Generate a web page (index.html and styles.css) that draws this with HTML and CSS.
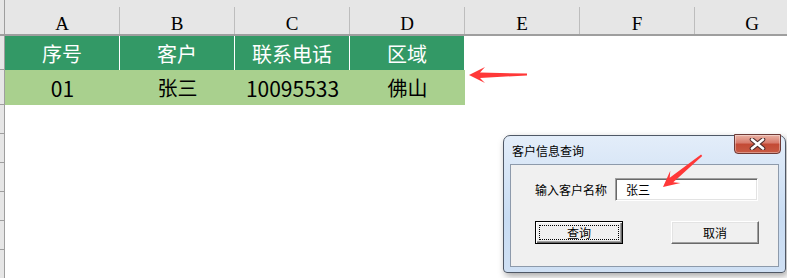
FILE: index.html
```html
<!DOCTYPE html>
<html lang="zh-CN">
<head>
    <meta charset="UTF-8">
    <meta name="viewport" content="width=device-width, initial-scale=1.0">
    <title>客户信息查询</title>
    <link rel="stylesheet" href="styles.css">
</head>
<body>
    <div class="sheet">
        <div class="col-heads">
            <div class="corner"></div>
            <div class="col-head">A</div>
            <div class="col-head">B</div>
            <div class="col-head">C</div>
            <div class="col-head">D</div>
            <div class="col-head">E</div>
            <div class="col-head">F</div>
            <div class="col-head">G</div>
        </div>
        <div class="row r-title">
            <div class="row-head"></div>
            <div class="cell">序号</div>
            <div class="cell">客户</div>
            <div class="cell">联系电话</div>
            <div class="cell">区域</div>
        </div>
        <div class="row r-data">
            <div class="row-head"></div>
            <div class="cell num">01</div>
            <div class="cell">张三</div>
            <div class="cell num">10095533</div>
            <div class="cell">佛山</div>
        </div>
        <div class="row r-empty"><div class="row-head"></div></div>
        <div class="row r-empty"><div class="row-head"></div></div>
        <div class="row r-empty"><div class="row-head"></div></div>
        <div class="row r-empty"><div class="row-head"></div></div>
        <div class="row r-empty"><div class="row-head"></div></div>
        <div class="row r-empty"><div class="row-head"></div></div>
    </div>

    <!-- query dialog floating over the sheet -->
    <div class="dialog">
        <div class="title-bar">
            <span>客户信息查询</span>
            <div class="close">
                <svg width="17" height="12" viewBox="0 0 17 12">
                    <path d="M3 1.5 L14 10.5 M14 1.5 L3 10.5" stroke="#4a2a2a" stroke-width="4.6" stroke-linecap="round"/>
                    <path d="M3 1.5 L14 10.5 M14 1.5 L3 10.5" stroke="#ffffff" stroke-width="2.6" stroke-linecap="round"/>
                </svg>
            </div>
        </div>
        <div class="client">
            <div class="form-row">
                <span class="label">输入客户名称</span>
                <input class="field" type="text" value="张三">
            </div>
            <div class="btn-row">
                <button class="btn default">查询</button>
                <button class="btn">取消</button>
            </div>
        </div>
    </div>

    <svg class="marks" width="787" height="278" viewBox="0 0 787 278">
        <polygon points="469,75 485,67 480,72.5 527,73.6 527,75.4 480,78 485,83" fill="#ff3838"/>
        <g transform="translate(663,187) rotate(-39.4)">
            <polygon points="0,0 16,-8 11,-2.8 50,-0.9 50,0.9 11,2.8 16,8" fill="#ff3838"/>
        </g>
    </svg>
</body>
</html>
```

FILE: styles.css
```css
body {
    margin: 0;
    width: 787px;
    height: 278px;
    overflow: hidden;
    position: relative;
    background: #ffffff;
    font-family: "Noto Sans CJK SC", sans-serif;
}

/* column letters */
.col-heads {
    display: flex;
    height: 34px;
    background: #e6e6e6;
    border-bottom: 2px solid #9e9e9e;
}
.corner {
    flex: none;
    width: 4px;
    border-right: 1px solid #9e9e9e;
}
.col-head {
    flex: none;
    width: 115px;
    box-sizing: border-box;
    margin-top: 7px;
    padding-top: 6px;
    line-height: 22px;
    text-align: center;
    border-right: 1px solid #bdbdbd;
    font-family: "Liberation Serif", serif;
    font-size: 19px;
    color: #000;
}

/* rows */
.row { display: flex; }
.row-head {
    flex: none;
    width: 5px;
    box-sizing: border-box;
    background: #e6e6e6;
    border-right: 1px solid #9e9e9e;
    border-bottom: 1px solid #9e9e9e;
}
.cell {
    flex: none;
    width: 115px;
    box-sizing: border-box;
    display: flex;
    align-items: center;
    justify-content: center;
    font-size: 20px;
}
.cell.num { font-size: 21px; }
.r-title { height: 34px; }
.r-title .cell {
    background: #339966;
    color: #ffffff;
    border-right: 1px solid #ffffff;
}
.r-data { height: 35px; }
.r-data .cell {
    background: #a9d08e;
    color: #000;
}
.r-empty { height: 29px; }

/* dialog */
.dialog {
    position: absolute;
    left: 503px;
    top: 135px;
    width: 283px;
    height: 138px;
    box-sizing: border-box;
    border: 1px solid #4f5866;
    border-radius: 7px 7px 4px 4px;
    background: linear-gradient(#e3edf9, #c8dcf3 60%, #cfe0f4);
    box-shadow: 2px 3px 7px rgba(0, 0, 0, 0.35);
}
.title-bar {
    position: relative;
    height: 28px;
    display: flex;
    align-items: center;
    padding-left: 8px;
    font-size: 12px;
    color: #000;
}
.close {
    position: absolute;
    right: 4px;
    top: -2px;
    width: 47px;
    height: 20px;
    box-sizing: border-box;
    border: 1px solid #6e3a36;
    border-radius: 0 0 4px 4px;
    background: linear-gradient(#eab2a4, #d7796a 45%, #c34a35 50%, #c85a43);
    box-shadow: inset 0 0 0 1px rgba(255, 255, 255, 0.35);
    display: flex;
    align-items: center;
    justify-content: center;
}
.client {
    margin: 0 6px;
    height: 103px;
    box-sizing: border-box;
    background: #f0f0f0;
    border: 1px solid #8d9aab;
    font-size: 12px;
}
.form-row {
    display: flex;
    align-items: center;
    margin-top: 13px;
    padding: 0 20px 0 24px;
}
.label { color: #000; }
.field {
    margin-left: auto;
    width: 143px;
    height: 23px;
    box-sizing: border-box;
    padding: 0 0 0 10px;
    border: 1px solid;
    border-color: #a0a0a0 #ffffff #ffffff #a0a0a0;
    box-shadow: inset 1px 1px #696969, inset -1px -1px #e3e3e3;
    background: #ffffff;
    font-family: "Noto Sans CJK SC", sans-serif;
    font-size: 12px;
    color: #000;
    outline: none;
}
.btn-row {
    display: flex;
    justify-content: space-between;
    margin-top: 20px;
    padding: 0 19px 0 24px;
}
.btn {
    width: 88px;
    height: 23px;
    box-sizing: border-box;
    padding: 0;
    position: relative;
    background: #f0f0f0;
    border: 1px solid;
    border-color: #ffffff #696969 #696969 #ffffff;
    box-shadow: inset -1px -1px #a0a0a0, inset 1px 1px #e3e3e3;
    font-family: "Noto Sans CJK SC", sans-serif;
    font-size: 12px;
    color: #000;
}
.btn.default {
    border: 1px solid #000;
    box-shadow: inset 1px 1px #ffffff, inset -1px -1px #696969, inset -2px -2px #a0a0a0;
}
.btn.default::after {
    content: "";
    position: absolute;
    left: 3px;
    top: 3px;
    right: 3px;
    bottom: 3px;
    border: 1px dotted #000;
}

.marks {
    position: absolute;
    left: 0;
    top: 0;
    pointer-events: none;
}
```
